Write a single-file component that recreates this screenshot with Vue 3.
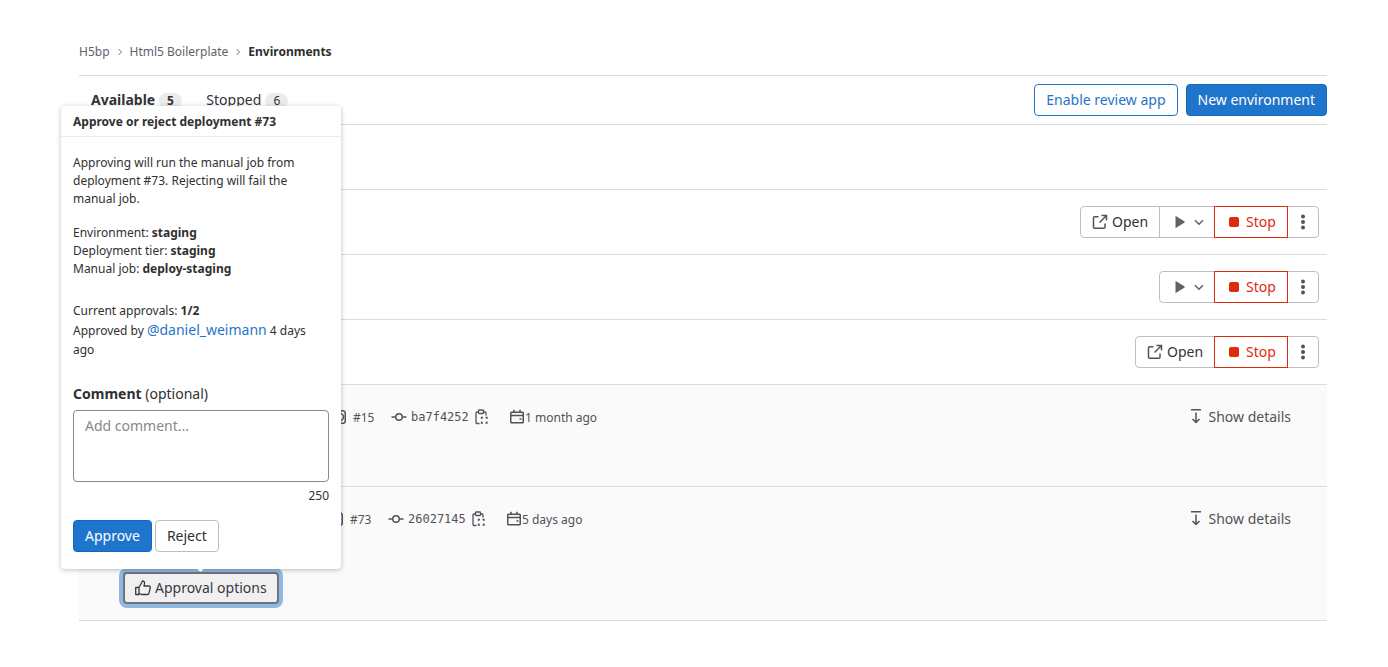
<template>
  <div class="page">
    <nav class="crumbs">
      <span>H5bp</span>
      <svg class="crumb-sep" width="8" height="8" viewBox="0 0 8 8"><path d="M2.500 1l3 3-3 3" fill="none" stroke="#737278" stroke-width="1" /></svg>
      <span>Html5 Boilerplate</span>
      <svg class="crumb-sep" width="8" height="8" viewBox="0 0 8 8"><path d="M2.500 1l3 3-3 3" fill="none" stroke="#737278" stroke-width="1" /></svg>
      <b>Environments</b>
    </nav>

    <div class="tabs">
      <div class="tab-list">
        <span class="tab active">Available <i class="count">5</i></span>
        <span class="tab">Stopped <i class="count">6</i></span>
      </div>
      <div class="tab-actions">
        <button class="btn outline">Enable review app</button>
        <button class="btn primary">New environment</button>
      </div>
    </div>

    <div class="env-spacer" />

    <div v-for="r in rows" :key="r.id" class="env-row">
      <div class="group">
        <button v-if="r.open" class="g-btn open">
          <svg width="16" height="16" viewBox="0 0 16 16" fill="none" stroke="#535158" stroke-width="1.5"><path d="M6.500 2.750H2.500a1 1 0 0 0-1 1v9.500a1 1 0 0 0 1 1h9.500a1 1 0 0 0 1-1V9.500" /><path d="M9.500 1.500h5v5M14.250 1.750L7.500 8.500" /></svg>
          Open
        </button>
        <button v-if="r.play" class="g-btn play">
          <svg width="16" height="16" viewBox="0 0 16 16"><path d="M3.500 2.600v10.800c0 .4.400.6.700.4l8.400-5.400c.3-.2.3-.6 0-.8L4.200 2.200c-.3-.2-.7 0-.7.4z" fill="#626168" /></svg>
          <svg width="16" height="16" viewBox="0 0 16 16"><path d="M4 6.200l4 4 4-4" fill="none" stroke="#626168" stroke-width="1.500" /></svg>
        </button>
        <button class="g-btn stop">
          <span class="stop-square" />
          Stop
        </button>
        <button class="g-btn more">
          <svg width="16" height="16" viewBox="0 0 16 16" fill="#535158"><circle cx="8" cy="2.500" r="2" /><circle cx="8" cy="8" r="2" /><circle cx="8" cy="13.500" r="2" /></svg>
        </button>
      </div>
    </div>

    <div v-for="d in deployments" :key="d.pipeline" class="deploy" :class="d.cls">
      <div class="deploy-head">
        <div class="meta">
          <svg class="pipe" width="16" height="16" viewBox="0 0 16 16" fill="none" stroke="#535158" stroke-width="1.500"><path d="M5 14.250h6a2.250 2.250 0 0 0 2.250-2.250V4A2.250 2.250 0 0 0 11 1.750H5" /><circle cx="8" cy="8" r="3.500" /></svg>
          <span class="ref">{{ d.pipeline }}</span>
          <svg class="commit" width="16" height="16" viewBox="0 0 16 16" fill="none" stroke="#535158" stroke-width="1.500"><circle cx="8" cy="8" r="3.250" /><path d="M.5 8h4.250M11.250 8h4.250" /></svg>
          <span class="sha">{{ d.sha }}</span>
          <svg class="clip" width="16" height="16" viewBox="0 0 16 16" fill="none" stroke="#535158" stroke-width="1.300"><path d="M5.500 3H4a1 1 0 0 0-1 1v9.500a1 1 0 0 0 1 1h2.500M10.500 3H12a1 1 0 0 1 1 1v2.500" /><rect x="5.500" y="1" width="5" height="3.500" rx=".8" /><path d="M8.500 10V8.500H10M12.500 8.500H14V10M14 12.500V14h-1.500M10 14H8.500v-1.500" /></svg>
          <svg class="cal" width="16" height="16" viewBox="0 0 16 16" fill="none" stroke="#535158" stroke-width="1.500"><rect x="1.750" y="3.250" width="12.500" height="10.500" rx=".8" /><path d="M1.750 6.500h12.500M5 .75v2.500M11 .75v2.500M10.500 10h2" /></svg>
          <span class="ago">{{ d.ago }}</span>
        </div>
        <span class="details">
          <svg width="16" height="16" viewBox="0 0 16 16" fill="none" stroke="#535158" stroke-width="1.500"><path d="M3 1.750h10M8 4.500v10M4.500 11L8 14.500l3.500-3.500" /></svg>
          Show details
        </span>
      </div>
      <button v-if="d.approval" class="approval">
        <svg width="16" height="16" viewBox="0 0 16 16" fill="none" stroke="#3a383f" stroke-width="1.300" stroke-linejoin="round"><path d="M.7 7.500h3.300v7H.7z" /><path d="M4 7.500L7.500 1c1.500 0 2.300 1 2 2.400L9 6h4.800a1.500 1.500 0 0 1 1.500 1.900l-1.400 5.400a1.500 1.500 0 0 1-1.500 1.200H7c-1.200 0-2-1-3-1" /></svg>
        <span>Approval options</span>
      </button>
    </div>

    <div class="popover">
      <div class="pop-title">Approve or reject deployment #73</div>
      <div class="pop-body">
        <p class="intro">Approving will run the manual job from deployment #73. Rejecting will fail the manual job.</p>
        <p class="facts">
          Environment: <b>staging</b><br />
          Deployment tier: <b>staging</b><br />
          Manual job: <b>deploy-staging</b>
        </p>
        <p class="current">Current approvals: <b>1/2</b></p>
        <p class="approved">Approved by <a class="user">@daniel_weimann</a> 4 days ago</p>
        <label class="comment-label"><b>Comment</b> (optional)</label>
        <div class="fake-area">Add comment...</div>
        <div class="chars">250</div>
        <div class="pop-actions">
          <button class="btn primary">Approve</button>
          <button class="btn plain">Reject</button>
        </div>
      </div>
      <span class="arrow" />
    </div>
  </div>
</template>

<script setup>
const rows = [
  { id: 1, open: true, play: true },
  { id: 2, open: false, play: true },
  { id: 3, open: true, play: false },
];

const deployments = [
  { pipeline: '#15', sha: 'ba7f4252', ago: '1 month ago', cls: 'first', approval: false },
  { pipeline: '#73', sha: '26027145', ago: '5 days ago', cls: 'second', approval: true },
];
</script>

<style>
html, body { margin: 0; background: #fff; }
</style>

<style scoped>
.page {
  position: relative;
  width: 1248px;
  height: 667px;
  margin-left: 79px;
  font-family: "Noto Sans", sans-serif;
  font-size: 14px;
  color: #303030;
}
button { font-family: inherit; }

.crumbs {
  display: flex;
  align-items: center;
  height: 76px;
  padding-top: 29px;
  box-sizing: border-box;
  font-size: 12px;
  line-height: 16px;
  color: #626168;
  border-bottom: 1px solid #dcdcde;
}
.crumbs b { color: #303030; font-weight: 700; }
.crumb-sep { margin: 0 6px; }

.tabs {
  display: flex;
  justify-content: space-between;
  align-items: center;
  height: 49px;
  box-sizing: border-box;
  border-bottom: 1px solid #dcdcde;
}
.tab-list { display: flex; gap: 24.5px; padding: 0 0 2px 12px; }
.tab { font-size: 14px; color: #333238; }
.tab.active { font-weight: 700; }
.tab:last-child .count { margin-left: .5px; }
.count {
  display: inline-block;
  min-width: 23px;
  font-style: normal;
  font-size: 12px;
  font-weight: 400;
  line-height: 16px;
  text-align: center;
  background: #ececef;
  border-radius: 8px;
}
.tab.active .count { font-weight: 700; }
.tab-actions { display: flex; gap: 8px; }

.btn {
  height: 32px;
  padding: 0 11px;
  font-size: 14px;
  line-height: 20px;
  border-radius: 4px;
  box-sizing: border-box;
}
.btn.outline { background: #fff; color: #1f75cb; border: 1px solid #1f75cb; }
.btn.primary { background: #1f75cb; color: #fff; border: 1px solid #1068bf; }
.btn.plain { background: #fff; color: #303030; border: 1px solid #bfbfc3; }

.env-spacer { height: 65px; border-bottom: 1px solid #dcdcde; box-sizing: border-box; }

.env-row {
  display: flex;
  justify-content: flex-end;
  align-items: center;
  height: 65px;
  box-sizing: border-box;
  padding-right: 8px;
  border-bottom: 1px solid #dcdcde;
}
.group { display: flex; height: 32px; }
.g-btn {
  display: flex;
  align-items: center;
  height: 32px;
  box-sizing: border-box;
  margin-left: -1px;
  padding: 0;
  background: #fff;
  font-size: 14px;
  line-height: 20px;
  color: #333238;
  border: 1px solid #bfbfc3;
}
.g-btn:first-child { border-radius: 4px 0 0 4px; margin-left: 0; }
.g-btn.open { width: 80px; gap: 4px; padding-left: 11px; }
.g-btn.play { width: 56px; gap: 3px; padding-left: 12px; }
.g-btn.stop {
  position: relative;
  width: 74px;
  gap: 7px;
  padding-left: 14px;
  color: #dd2b0e;
  border-color: #dd2b0e;
}
.g-btn.more {
  width: 32px;
  justify-content: center;
  border-radius: 0 4px 4px 0;
}
.stop-square { width: 10px; height: 10px; background: #dd2b0e; border-radius: 2px; }

.deploy { background: #fafafa; border-bottom: 1px solid #dcdcde; box-sizing: border-box; }
.deploy.first { height: 102px; }
.deploy.second { height: 134px; }
.deploy-head {
  display: flex;
  justify-content: space-between;
  align-items: center;
  height: 20px;
  padding: 22px 36px 0 0;
}
.meta { display: flex; align-items: center; font-size: 12px; color: #535158; }
.first .meta { padding-left: 253px; }
.second .meta { padding-left: 250px; }
.ref { margin-left: 5px; width: 38px; }
.sha { font-family: "DejaVu Sans Mono", monospace; font-size: 12px; margin: 0 4px; width: 58px; }
.clip { margin-right: 20px; }
.details { display: flex; align-items: center; gap: 4px; margin-bottom: 2px; font-size: 14px; color: #535158; }

.approval {
  display: flex;
  align-items: center;
  gap: 4px;
  margin: 43px 0 0 44px;
  width: 156px;
  height: 32px;
  padding: 0 10px;
  box-sizing: border-box;
  font-size: 14px;
  line-height: 20px;
  white-space: nowrap;
  color: #3a383f;
  background: #f0f0f0;
  border: 2px solid #737278;
  border-radius: 4px;
  box-shadow: 0 0 0 4px #8fb8e5;
}

.popover {
  position: absolute;
  left: -18px;
  top: 106px;
  width: 280px;
  height: 463px;
  box-sizing: border-box;
  background: #fff;
  border-radius: 4px;
  box-shadow: 0 1px 5px rgba(0, 0, 0, .25);
  font-size: 12px;
  line-height: 18px;
}
.pop-title {
  padding: 7px 12px 0;
  height: 31px;
  box-sizing: border-box;
  font-weight: 700;
  border-bottom: 1px solid #ececef;
}
.pop-body { padding: 17px 12px 0; }
.pop-body p { margin: 0; }
.facts { margin-top: 16px !important; }
.current { margin-top: 24px !important; }
.approved { margin-top: 0 !important; line-height: 19px; }
.user { color: #1f75cb; font-size: 14px; }
.comment-label { display: block; margin-top: 25px; font-size: 14px; line-height: 20px; }
.fake-area {
  margin-top: 6px;
  height: 72px;
  box-sizing: border-box;
  padding: 6px 11px;
  font-size: 14px;
  line-height: 18px;
  color: #89888d;
  border: 1px solid #89888d;
  border-radius: 4px;
}
.chars { text-align: right; margin-top: 5px; }
.pop-actions { display: flex; gap: 3px; margin-top: 15px; }
.arrow {
  position: absolute;
  left: 137px;
  bottom: -2px;
  width: 5px;
  height: 5px;
  background: #fff;
  transform: rotate(45deg);
}
</style>
